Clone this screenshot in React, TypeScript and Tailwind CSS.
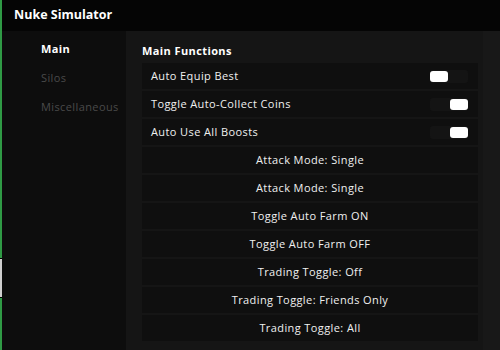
export default function App() {
  const toggles = [
    { name: "Auto Equip Best", on: false },
    { name: "Toggle Auto-Collect Coins", on: true },
    { name: "Auto Use All Boosts", on: true },
  ];
  const buttons = [
    "Attack Mode: Single",
    "Attack Mode: Single",
    "Toggle Auto Farm ON",
    "Toggle Auto Farm OFF",
    "Trading Toggle: Off",
    "Trading Toggle: Friends Only",
    "Trading Toggle: All",
  ];

  return (
    <div
      className="w-[500px] h-[350px] overflow-hidden bg-[#0e0e0e] text-white flex"
      style={{ fontFamily: "'Open Sans', Lato, sans-serif" }}
    >
      {/* green edge */}
      <div className="w-[2px] h-full bg-[#2f9a45] flex flex-col">
        <div className="h-[258px]" />
        <div className="h-[40px] bg-[#cfcfcf] border-y border-black" />
      </div>

      <div className="flex-1 flex flex-col">
        <div className="h-[31px] bg-[#050505] flex items-center pl-[12px]">
          <span className="text-[12.5px] font-bold">Nuke Simulator</span>
        </div>

        <div className="flex flex-1">
          <div className="w-[124px] bg-[#0d0d0d] flex flex-col pl-[39px] pt-[10px] gap-[12px] text-[11px] tracking-[0.4px]">
            <div className="h-[17px] flex items-center font-bold text-white">Main</div>
            <div className="h-[17px] flex items-center font-medium text-[#4a4a4a]">Silos</div>
            <div className="h-[17px] flex items-center font-medium text-[#4a4a4a]">Miscellaneous</div>
          </div>

          <div className="flex-1 bg-[#151515] flex">
            <div className="w-[352px] flex flex-col pl-[16px] pt-[12px]">
              <div className="text-[11px] font-bold tracking-[0.4px] h-[16px] flex items-center mb-[4px]">Main Functions</div>
              <div className="flex flex-col gap-[2px]">
                {toggles.map((t, i) => (
                  <div key={i} className="h-[26px] bg-[#0f0f0f] flex items-center justify-between pl-[9px] pr-[10px]">
                    <span className="text-[11px] font-medium text-[#f0f0f0] tracking-[0.4px]">{t.name}</span>
                    <div className={`w-[38px] h-[13px] bg-[#141414] rounded-[3px] flex items-center ${t.on ? "justify-end" : "justify-start"}`}>
                      <div className="w-[18px] h-[11px] bg-white rounded-[3px]" />
                    </div>
                  </div>
                ))}
                {buttons.map((b, i) => (
                  <div key={i} className="h-[26px] bg-[#0f0f0f] flex items-center justify-center">
                    <span className="text-[11px] font-medium text-[#f0f0f0] tracking-[0.4px]">{b}</span>
                  </div>
                ))}
              </div>
            </div>
            <div className="w-[5px]" />
            <div className="flex-1 bg-[#181818]" />
          </div>
        </div>
      </div>
    </div>
  );
}
